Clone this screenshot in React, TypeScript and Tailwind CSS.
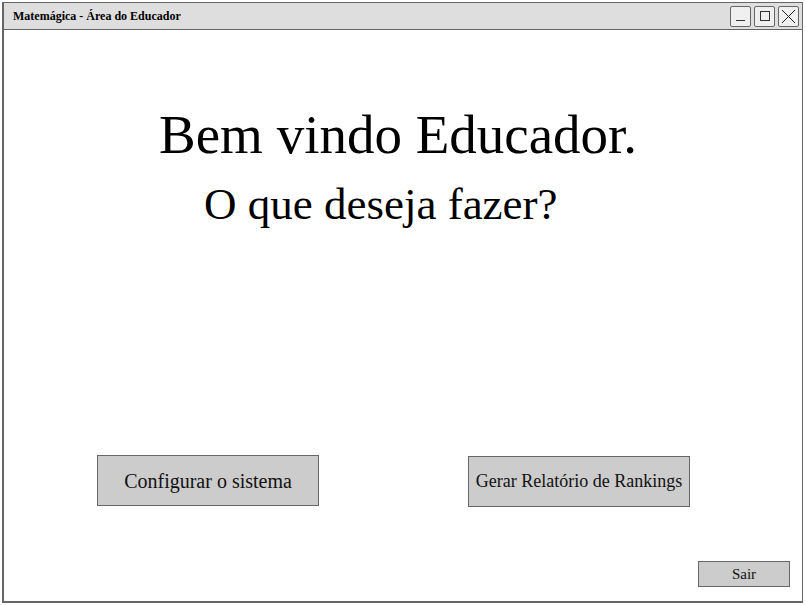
const serif = { fontFamily: '"Liberation Serif", "Times New Roman", serif' };

function WinButton({ children }: { children: React.ReactNode }) {
  return (
    <div className="flex h-[21px] w-[21px] items-center justify-center rounded-[2px] border border-[#666] bg-[#f0f0f0]">
      {children}
    </div>
  );
}

export default function App() {
  return (
    <div className="h-[605px] w-[806px] bg-white p-[2px]" style={serif}>
      <div className="flex h-[601px] w-[801px] flex-col border border-l-2 border-b-2 border-[#666] bg-white">
        <div className="flex h-[27px] shrink-0 items-center justify-between border-b border-[#666] bg-[#dedede] pl-[9px] pr-[3px]">
          <span className="text-[12px] font-bold text-black">Matemágica - Área do Educador</span>
          <div className="flex gap-[3px]">
            <WinButton>
              <div className="mt-[9px] h-px w-[9px] bg-[#333]" />
            </WinButton>
            <WinButton>
              <div className="h-[10px] w-[10px] border border-[#333]" />
            </WinButton>
            <WinButton>
              <svg width="15" height="15" viewBox="0 0 15 15">
                <path d="M1 1 L14 14 M14 1 L1 14" stroke="#222" strokeWidth="1" />
              </svg>
            </WinButton>
          </div>
        </div>

        <div className="flex flex-1 flex-col">
          <div className="mt-[77px] pl-[155px] text-[55px] leading-none text-black">Bem vindo Educador.</div>
          <div className="mt-[20px] pl-[200px] text-[45px] leading-none text-black">O que deseja fazer?</div>

          <div className="mt-[228px] flex items-start pl-[93px]">
            <button className="h-[51px] w-[222px] border border-[#666] bg-[#cccccc] text-[20px] text-[#111]">
              Configurar o sistema
            </button>
            <button className="ml-[149px] mt-px h-[51px] w-[222px] border border-[#666] bg-[#cccccc] text-[18px] text-[#111]">
              Gerar Relatório de Rankings
            </button>
          </div>

          <div className="mt-auto mb-[14px] flex justify-end pr-[12px]">
            <button className="h-[26px] w-[92px] border border-[#666] bg-[#cccccc] text-[15px] text-[#111]">
              Sair
            </button>
          </div>
        </div>
      </div>
    </div>
  );
}
